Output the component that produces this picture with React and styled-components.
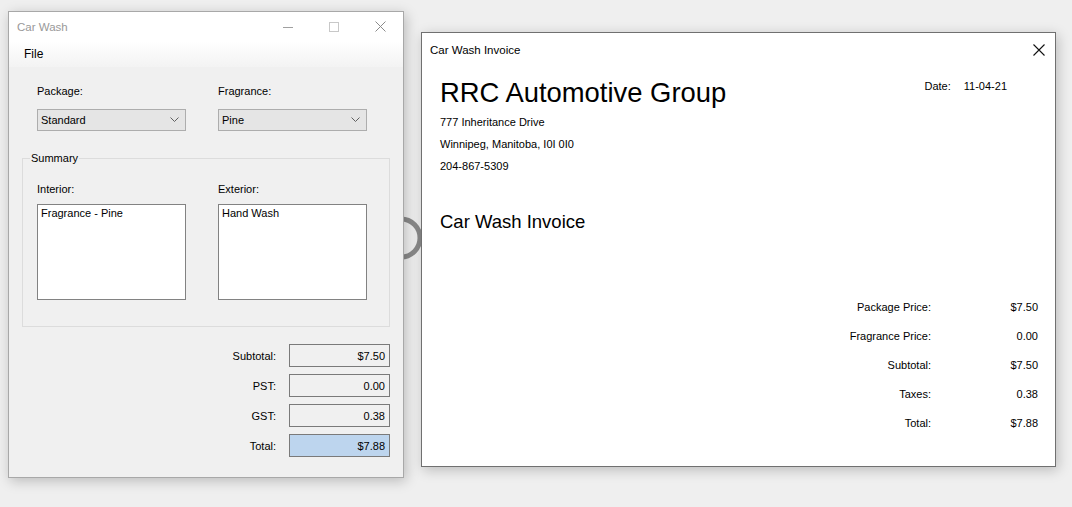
import React from 'react'
import styled, { createGlobalStyle } from 'styled-components'

const GlobalStyle = createGlobalStyle`
  html, body { margin: 0; padding: 0; background: #efefef; }
  body { font-family: "Liberation Sans", Arial, sans-serif; font-size: 11px; color: #000; }
`

const Desktop = styled.div`
  position: relative;
  width: 1072px;
  height: 507px;
  overflow: hidden;
  background: #efefef;
`

const Spinner = styled.svg`
  position: absolute;
  left: 371px;
  top: 208px;
`

const Window = styled.div`
  position: absolute;
  box-sizing: border-box;
  display: flex;
  flex-direction: column;
  left: ${p => p.$x}px;
  top: ${p => p.$y}px;
  width: ${p => p.$w}px;
  height: ${p => p.$h}px;
  border: 1px solid ${p => p.$border};
  background: ${p => p.$bg};
  box-shadow: 2px 3px 12px rgba(0, 0, 0, 0.22);
`

const TitleBar = styled.div`
  display: flex;
  align-items: center;
  height: ${p => p.$h}px;
  background: #fff;
  flex-shrink: 0;
`

const TitleText = styled.div`
  flex: 1;
  padding-left: 8px;
  font-size: ${p => p.$size}px;
  color: ${p => p.$color};
`

const CaptionButton = styled.div`
  width: ${p => p.$w || 46}px;
  height: 100%;
  display: flex;
  align-items: center;
  justify-content: center;
`

const MenuBar = styled.div`
  height: 26px;
  display: flex;
  align-items: center;
  padding-left: 15px;
  font-size: 12px;
  background: linear-gradient(to bottom, #ffffff, #f3f3f3);
  flex-shrink: 0;
`

const FormBody = styled.div`
  flex: 1;
  background: #f0f0f0;
  padding: 17px 13px 0;
  display: flex;
  flex-direction: column;
`

const FieldRow = styled.div`
  display: flex;
  gap: 32px;
  padding-left: 15px;
`

const Field = styled.div`
  width: 149px;
  display: flex;
  flex-direction: column;
`

const Label = styled.div`
  line-height: 14px;
  height: 14px;
  margin-bottom: ${p => p.$mb}px;
`

const Combo = styled.div`
  box-sizing: border-box;
  height: 22px;
  border: 1px solid #adadad;
  background: #e5e5e5;
  display: flex;
  align-items: center;
  justify-content: space-between;
  padding: 0 6px 0 3px;
`

const Group = styled.fieldset`
  margin: 20px 0 0;
  padding: 17px 14px 0;
  height: 176px;
  box-sizing: border-box;
  border: 1px solid #dcdcdc;
  border-radius: 0;
  display: flex;
  gap: 32px;
`

const Legend = styled.legend`
  padding: 0 1px;
  margin-left: -7px;
  line-height: 14px;
`

const ListBox = styled.div`
  box-sizing: border-box;
  width: 149px;
  height: 96px;
  background: #fff;
  border: 1px solid #828282;
  padding: 2px 3px;
  line-height: 13px;
`

const Totals = styled.div`
  margin-top: 17px;
  display: grid;
  grid-template-columns: auto 101px;
  justify-content: end;
  column-gap: 13px;
  row-gap: 7px;
  align-items: center;
`

const TotalLabel = styled.div`
  text-align: right;
`

const TotalBox = styled.div`
  box-sizing: border-box;
  height: 23px;
  border: 1px solid #7a7a7a;
  background: ${p => (p.$highlight ? '#bdd5ee' : '#f0f0f0')};
  display: flex;
  align-items: center;
  justify-content: flex-end;
  padding-right: 4px;
`

const InvoiceBody = styled.div`
  flex: 1;
  padding: 11px 48px 0 18px;
  display: flex;
  flex-direction: column;
`

const Header = styled.div`
  display: flex;
  justify-content: space-between;
  align-items: flex-start;
`

const Company = styled.div`
  font-size: 27.4px;
  line-height: 31px;
`

const Address = styled.div`
  margin-top: 3px;
`

const AddressLine = styled.div`
  line-height: 22px;
`

const DateBlock = styled.div`
  margin-top: 2px;
  display: flex;
  gap: 13px;
  line-height: 14px;
`

const InvoiceTitle = styled.div`
  margin-top: 34px;
  font-size: 18.5px;
  line-height: 22px;
`

const Prices = styled.div`
  margin: 67px -31px 0 0;
  display: grid;
  grid-template-columns: auto 80px;
  justify-content: end;
  column-gap: 27px;
  row-gap: 15px;
  line-height: 14px;
`

const PriceCell = styled.div`
  text-align: right;
`

const Chevron = () => (
  <svg width="9" height="6" viewBox="0 0 9 6">
    <polyline points="0.5,0.5 4.5,4.5 8.5,0.5" fill="none" stroke="#606060" strokeWidth="1" />
  </svg>
)

const summaryRows = [
  { label: 'Subtotal:', value: '$7.50' },
  { label: 'PST:', value: '0.00' },
  { label: 'GST:', value: '0.38' },
  { label: 'Total:', value: '$7.88', highlight: true },
]

const priceRows = [
  { label: 'Package Price:', value: '$7.50' },
  { label: 'Fragrance Price:', value: '0.00' },
  { label: 'Subtotal:', value: '$7.50' },
  { label: 'Taxes:', value: '0.38' },
  { label: 'Total:', value: '$7.88' },
]

const App = () => {
  return (
    <>
      <GlobalStyle />
      <Desktop>
        <Spinner width="60" height="60" viewBox="0 0 60 60">
          <circle cx="30" cy="30" r="19" fill="none" stroke="#8a8a8a" strokeWidth="5" />
        </Spinner>

        <Window $x={8} $y={11} $w={396} $h={467} $border="#a8a8a8" $bg="#f0f0f0">
          <TitleBar $h={29}>
            <TitleText $size={11.5} $color="#999">Car Wash</TitleText>
            <CaptionButton>
              <svg width="10" height="10" viewBox="0 0 10 10">
                <line x1="0" y1="5.5" x2="10" y2="5.5" stroke="#a0a0a0" strokeWidth="1" />
              </svg>
            </CaptionButton>
            <CaptionButton>
              <svg width="10" height="10" viewBox="0 0 10 10">
                <rect x="0.5" y="0.5" width="9" height="9" fill="none" stroke="#c8c8c8" strokeWidth="1" />
              </svg>
            </CaptionButton>
            <CaptionButton>
              <svg width="11" height="11" viewBox="0 0 11 11">
                <path d="M0.5 0.5 L10.5 10.5 M10.5 0.5 L0.5 10.5" stroke="#8a8a8a" strokeWidth="1" />
              </svg>
            </CaptionButton>
          </TitleBar>
          <MenuBar>File</MenuBar>
          <FormBody>
            <FieldRow>
              <Field>
                <Label $mb={11}>Package:</Label>
                <Combo>
                  <span>Standard</span>
                  <Chevron />
                </Combo>
              </Field>
              <Field>
                <Label $mb={11}>Fragrance:</Label>
                <Combo>
                  <span>Pine</span>
                  <Chevron />
                </Combo>
              </Field>
            </FieldRow>

            <Group>
              <Legend>Summary</Legend>
              <Field>
                <Label $mb={8}>Interior:</Label>
                <ListBox>Fragrance - Pine</ListBox>
              </Field>
              <Field>
                <Label $mb={8}>Exterior:</Label>
                <ListBox>Hand Wash</ListBox>
              </Field>
            </Group>

            <Totals>
              {summaryRows.map(({ label, value, highlight }) => (
                <React.Fragment key={label}>
                  <TotalLabel>{label}</TotalLabel>
                  <TotalBox $highlight={highlight}>{value}</TotalBox>
                </React.Fragment>
              ))}
            </Totals>
          </FormBody>
        </Window>

        <Window $x={421} $y={32} $w={635} $h={435} $border="#707070" $bg="#fff">
          <TitleBar $h={33}>
            <TitleText $size={11.5} $color="#000">Car Wash Invoice</TitleText>
            <CaptionButton $w={32}>
              <svg width="12" height="12" viewBox="0 0 12 12">
                <path d="M0.5 0.5 L11.5 11.5 M11.5 0.5 L0.5 11.5" stroke="#111" strokeWidth="1.1" />
              </svg>
            </CaptionButton>
          </TitleBar>
          <InvoiceBody>
            <Header>
              <div>
                <Company>RRC Automotive Group</Company>
                <Address>
                  <AddressLine>777 Inheritance Drive</AddressLine>
                  <AddressLine>Winnipeg, Manitoba, I0I 0I0</AddressLine>
                  <AddressLine>204-867-5309</AddressLine>
                </Address>
              </div>
              <DateBlock>
                <span>Date:</span>
                <span>11-04-21</span>
              </DateBlock>
            </Header>
            <InvoiceTitle>Car Wash Invoice</InvoiceTitle>
            <Prices>
              {priceRows.map(({ label, value }) => (
                <React.Fragment key={label}>
                  <PriceCell>{label}</PriceCell>
                  <PriceCell>{value}</PriceCell>
                </React.Fragment>
              ))}
            </Prices>
          </InvoiceBody>
        </Window>
      </Desktop>
    </>
  )
}

export default App
